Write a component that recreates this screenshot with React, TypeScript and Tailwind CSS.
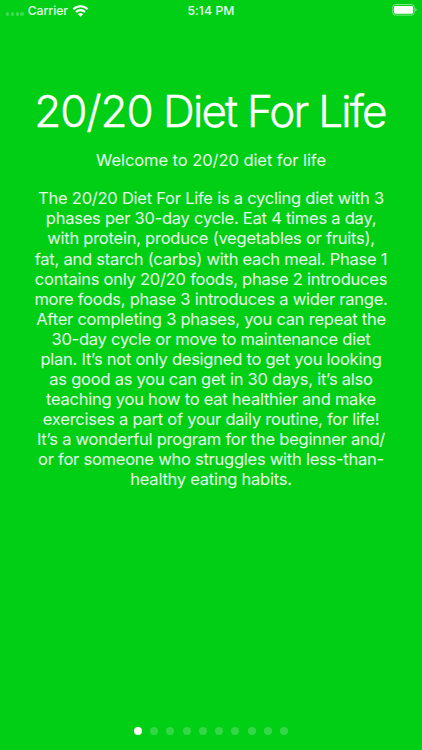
const paragraph = [
  "The 20/20 Diet For Life is a cycling diet with 3",
  "phases per 30-day cycle. Eat 4 times a day,",
  "with protein, produce (vegetables or fruits),",
  "fat, and starch (carbs) with each meal. Phase 1",
  "contains only 20/20 foods, phase 2 introduces",
  "more foods, phase 3 introduces a wider range.",
  "After completing 3 phases, you can repeat the",
  "30-day cycle or move to maintenance diet",
  "plan. It’s not only designed to get you looking",
  "as good as you can get in 30 days, it’s also",
  "teaching you how to eat healthier and make",
  "exercises a part of your daily routine, for life!",
  "It’s a wonderful program for the beginner and/",
  "or for someone who struggles with less-than-",
  "healthy eating habits.",
];

const pages = Array.from({ length: 10 }, (_, i) => i);

function WifiIcon() {
  return (
    <svg className="ml-[4px] h-[12px] w-[17px]" viewBox="0 0 17 12" fill="none" stroke="currentColor" strokeWidth="2.1">
      <path d="M1.4 4.2a10.2 10.2 0 0 1 14.2 0" />
      <path d="M4 7a6.4 6.4 0 0 1 9 0" />
      <path d="M8.5 11.7 6 9.2a3.6 3.6 0 0 1 5 0z" fill="currentColor" stroke="none" />
    </svg>
  );
}

function BatteryIcon() {
  return (
    <svg className="-mt-px h-[12px] w-[26px]" viewBox="0 0 26 12" fill="none">
      <rect x="0.8" y="0.5" width="21.4" height="10.6" rx="2.8" stroke="white" strokeOpacity="0.5" />
      <rect x="2" y="1.9" width="19" height="7.8" rx="1.4" fill="white" />
      <path d="M23.4 4c1.6.6 1.6 3 0 3.6z" fill="white" fillOpacity="0.5" />
    </svg>
  );
}

function App() {
  return (
    <div className="flex h-[750px] w-[422px] flex-col items-center overflow-hidden bg-[#00cf16] font-['Inter',sans-serif] text-white">
      <header className="grid h-5 w-full grid-cols-3 items-center pt-px pr-[4px] pl-[6px] text-[12.2px]">
        <div className="flex items-center">
          <div className="mt-[7px] mr-[4px] flex gap-[1.4px]">
            {[0, 1, 2, 3].map((dot) => (
              <span key={dot} className="size-[3.4px] rounded-full bg-white/25" />
            ))}
          </div>
          <span className="font-medium tracking-[-0.05px] text-white/90">Carrier</span>
          <WifiIcon />
        </div>
        <span className="-ml-[2px] pt-px text-center font-medium tracking-[0.1px] text-white/90">5:14 PM</span>
        <div className="flex justify-end">
          <BatteryIcon />
        </div>
      </header>

      <h1 className="mt-[66px] -ml-[2px] text-[44px] leading-[50px] font-light tracking-[-1.8px] whitespace-nowrap [-webkit-text-stroke:0.4px_white]">
        <span className="tracking-[-1.1px]">20/20</span> Diet For Life
      </h1>
      <p className="mt-[14px] text-[16.5px] leading-5 tracking-[-0.06px] whitespace-nowrap text-white/90">Welcome to 20/20 diet for life</p>
      <div className="mt-[18.4px] text-center text-[16.5px] leading-[20.04px] tracking-[-0.24px] text-white/90">
        {paragraph.map((line) => (
          <p key={line} className="whitespace-nowrap">{line}</p>
        ))}
      </div>

      <div className="mt-auto mb-[15px] flex gap-[8.3px]">
        {pages.map((page) => (
          <span key={page} className={page === 0 ? "size-2 rounded-full bg-white" : "size-2 rounded-full bg-white/20"} />
        ))}
      </div>
    </div>
  );
}

export default App;
